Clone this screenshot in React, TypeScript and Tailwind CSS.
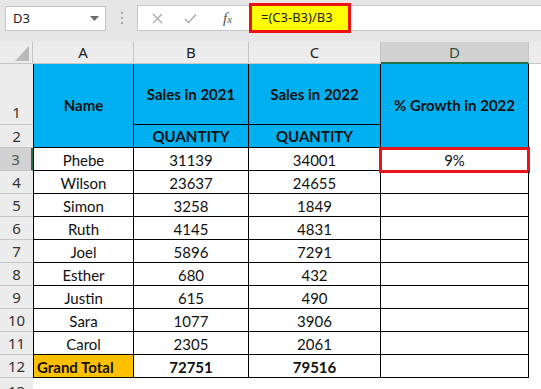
import React from "react";

const rows: [string, string, string][] = [
  ["Phebe", "31139", "34001"],
  ["Wilson", "23637", "24655"],
  ["Simon", "3258", "1849"],
  ["Ruth", "4145", "4831"],
  ["Joel", "5896", "7291"],
  ["Esther", "680", "432"],
  ["Justin", "615", "490"],
  ["Sara", "1077", "3906"],
  ["Carol", "2305", "2061"],
];

const ui = "font-['Noto_Sans','Open_Sans',sans-serif]";
const cell = "font-['Lato','Open_Sans',sans-serif] text-[15px] text-[#111]";

function RowHead({ n, sel, end }: { n: string; sel?: boolean; end?: boolean }) {
  return (
    <div
      className={
        ui +
        " flex justify-center text-[15px] leading-none border-b border-[#c6c6c6] " +
        (end ? "items-end pb-[4px] " : "items-center ") +
        (sel
          ? "bg-[#d2d2d2] text-[#4a5a50] border-r-2 border-r-[#217346]"
          : "bg-[#ececec] text-[#333]")
      }
    >
      {n}
    </div>
  );
}

export default function App() {
  return (
    <div className="w-[541px] h-[389px] overflow-hidden bg-white">
      {/* toolbar */}
      <div className="h-[42px] bg-[#e6e6e6] flex items-start pt-[5px]">
        <div
          className={
            ui +
            " ml-[5px] mt-[1px] w-[101px] h-[25px] bg-white border border-[#c6c6c6] flex items-center justify-between pl-[7px] pr-[6px] text-[13px] text-[#222]"
          }
        >
          <span>D3</span>
          <svg width="9" height="6" viewBox="0 0 9 6">
            <polygon points="0,0 9,0 4.5,5" fill="#6b6b6b" />
          </svg>
        </div>
        <div className="w-[31px] h-[26px] flex flex-col items-center justify-center gap-[3px]">
          <div className="w-[2px] h-[2px] bg-[#a8a8a8]" />
          <div className="w-[2px] h-[2px] bg-[#a8a8a8]" />
          <div className="w-[2px] h-[2px] bg-[#a8a8a8]" />
        </div>
        <div className="flex-1 h-[26px] bg-white border border-[#c6c6c6] border-r-0 flex items-center">
          <div className="w-[111px] h-full flex items-center">
            <svg className="ml-[14px]" width="11" height="11" viewBox="0 0 11 11">
              <path d="M1 1 L10 10 M10 1 L1 10" stroke="#a9a9a9" strokeWidth="1.3" />
            </svg>
            <svg className="ml-[21px]" width="13" height="11" viewBox="0 0 13 11">
              <path d="M1 6 L4.5 9.5 L12 1.5" stroke="#a9a9a9" strokeWidth="1.5" fill="none" />
            </svg>
            <span className="ml-[26px] italic text-[15px] text-[#555] leading-none font-['Liberation_Serif',serif]">
              f<span className="text-[11px]">x</span>
            </span>
          </div>
          <div
            className={
              ui +
              " w-[102px] h-[30px] -my-[2px] bg-[#ffff00] border-[3px] border-[#ee1111] flex items-center pl-[9px] text-[13px] text-[#222]"
            }
          >
            =(C3-B3)/B3
          </div>
        </div>
      </div>

      {/* sheet */}
      <div className="grid grid-cols-[33px_101px_115px_132px_148px_12px] grid-rows-[22px_61px_repeat(11,23px)_12px]">
        {/* column header row */}
        <div className="bg-[#ececec] border-r border-b border-[#c6c6c6] flex items-end justify-end pr-[3px] pb-[2px]">
          <svg width="14" height="15" viewBox="0 0 14 15">
            <polygon points="14,0 14,15 0,15" fill="#b9b9b9" />
          </svg>
        </div>
        {["A", "B", "C"].map((c) => (
          <div
            key={c}
            className={
              ui +
              " bg-[#ececec] border-r border-b border-[#c6c6c6] flex items-center justify-center text-[15px] text-[#222]"
            }
          >
            {c}
          </div>
        ))}
        <div
          className={
            ui +
            " bg-[#d2d2d2] border-r border-[#c6c6c6] border-b-2 border-b-[#217346] flex items-center justify-center text-[15px] text-[#2f4f3f]"
          }
        >
          D
        </div>
        <div className="bg-[#ececec] border-b border-[#c6c6c6]" />

        {/* row 1 */}
        <RowHead n="1" end />
        <div className={cell + " row-span-2 bg-[#00b0f0] border-l border-r border-b border-black flex items-center justify-center font-bold"}>
          Name
        </div>
        <div className={cell + " bg-[#00b0f0] border-r border-b border-black flex items-center justify-center font-bold"}>
          Sales in 2021
        </div>
        <div className={cell + " bg-[#00b0f0] border-r border-b border-black flex items-center justify-center font-bold"}>
          Sales in 2022
        </div>
        <div className={cell + " row-span-2 bg-[#00b0f0] border-r border-b border-black flex items-center justify-center font-bold"}>
          % Growth in 2022
        </div>
        <div />

        {/* row 2 */}
        <RowHead n="2" />
        <div className={cell + " bg-[#00b0f0] border-r border-b border-black flex items-center justify-center font-bold"}>
          QUANTITY
        </div>
        <div className={cell + " bg-[#00b0f0] border-r border-b border-black flex items-center justify-center font-bold"}>
          QUANTITY
        </div>
        <div />

        {/* data rows */}
        {rows.map((r, i) => (
          <React.Fragment key={r[0]}>
            <RowHead n={String(i + 3)} sel={i === 0} />
            <div className={cell + " border-l border-r border-b border-black flex items-center justify-center pt-[2px]"}>
              {r[0]}
            </div>
            <div className={cell + " border-r border-b border-black flex items-center justify-center pt-[2px]"}>
              {r[1]}
            </div>
            <div className={cell + " border-r border-b border-black flex items-center justify-center pt-[2px]"}>
              {r[2]}
            </div>
            <div className={cell + " relative border-r border-b border-black flex items-center justify-center pt-[2px]"}>
              {i === 0 ? "9%" : ""}
              {i === 0 && (
                <div className="absolute left-[-2px] right-[-2px] top-[-1px] bottom-[-3px] border-[3px] border-[#e8141b]" />
              )}
            </div>
            <div />
          </React.Fragment>
        ))}

        {/* row 12 */}
        <RowHead n="12" />
        <div className={cell + " bg-[#ffc000] border-l border-r border-b border-black flex items-center pl-[3px] font-bold pt-[2px]"}>
          Grand Total
        </div>
        <div className={cell + " border-r border-b border-black flex items-center justify-center font-bold pt-[2px]"}>
          72751
        </div>
        <div className={cell + " border-r border-b border-black flex items-center justify-center font-bold pt-[2px]"}>
          79516
        </div>
        <div className="border-r border-b border-black" />
        <div />

        {/* row 13 (partial) */}
        <div className={ui + " bg-[#ececec] flex items-start justify-center pt-[6px] text-[15px] leading-none text-[#333]"}>
          13
        </div>
        <div />
        <div />
        <div />
        <div />
        <div />
      </div>
    </div>
  );
}
